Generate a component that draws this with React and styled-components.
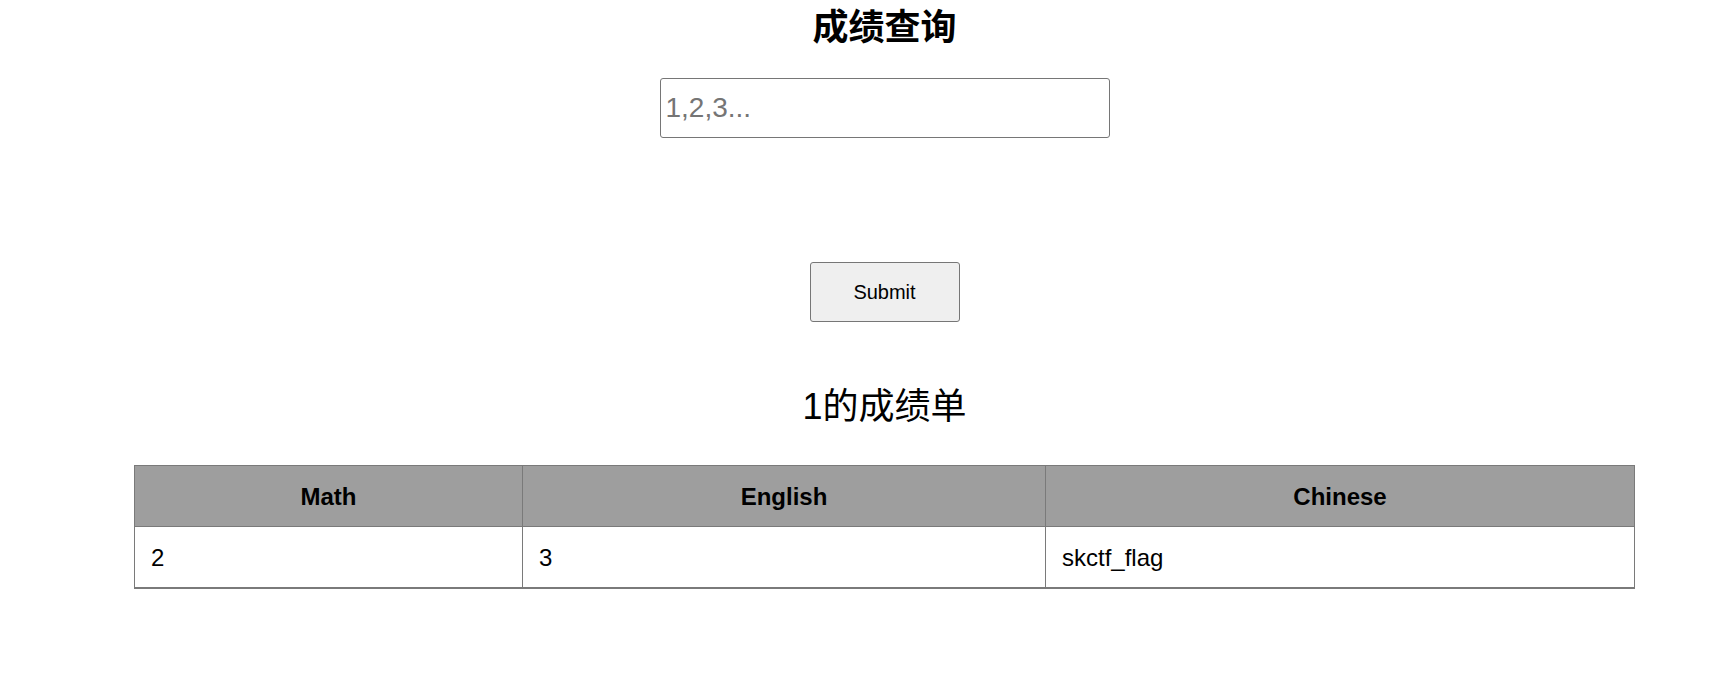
import React from "react";
import styled, { createGlobalStyle } from "styled-components";

const GlobalStyle = createGlobalStyle`
  html, body {
    margin: 0;
    padding: 0;
    background: #ffffff;
  }
  body {
    margin: 8px;
    font-family: "Liberation Sans", Arial, "Noto Sans CJK SC", sans-serif;
    color: #000;
  }
`;

const Page = styled.div`
  display: flex;
  flex-direction: column;
  align-items: center;
  padding-left: 46px;
`;

const Title = styled.h1`
  margin: 0;
  font-family: "Liberation Sans", Arial, "Noto Sans CJK SC", sans-serif;
  font-size: 36px;
  line-height: 40px;
  font-weight: bold;
`;

const QueryForm = styled.form`
  display: flex;
  flex-direction: column;
  align-items: center;
  margin: 30px 0 0;
`;

const QueryInput = styled.input`
  box-sizing: border-box;
  width: 450px;
  height: 60px;
  padding: 0 5px;
  border: 1px solid #767676;
  border-radius: 3px;
  font-family: "Liberation Sans", Arial, sans-serif;
  font-size: 28px;
  color: #000;
  outline: none;
  &::placeholder {
    color: #757575;
  }
`;

const SubmitButton = styled.button`
  box-sizing: border-box;
  margin-top: 124px;
  width: 150px;
  height: 60px;
  background: #efefef;
  border: 1px solid #767676;
  border-radius: 3px;
  font-family: "Liberation Sans", Arial, sans-serif;
  font-size: 20px;
  color: #000;
  cursor: pointer;
`;

const SubTitle = styled.h2`
  margin: 65px 0 0;
  font-family: "Liberation Sans", Arial, "Noto Sans CJK SC", sans-serif;
  font-size: 36px;
  line-height: 40px;
  font-weight: normal;
`;

const ScoreTable = styled.table`
  margin-top: 38px;
  width: 1500px;
  table-layout: fixed;
  border-collapse: collapse;
  border: 1px solid #7a7a7a;
  border-bottom: 2px solid #7a7a7a;
  font-family: "Liberation Sans", Arial, sans-serif;
  font-size: 24px;
`;

const HeadCell = styled.th`
  height: 60px;
  padding: 0 16px;
  background: #9e9e9e;
  border: 1px solid #7a7a7a;
  font-weight: bold;
  text-align: center;
  line-height: 27px;
`;

const DataCell = styled.td`
  height: 60px;
  padding: 0 16px;
  background: #ffffff;
  border: 1px solid #7a7a7a;
  text-align: left;
  line-height: 27px;
`;

const columns = [
  { name: "Math", width: 388, value: "2" },
  { name: "English", width: 523, value: "3" },
  { name: "Chinese", width: 589, value: "skctf_flag" },
];

export default function App() {
  return (
    <>
      <GlobalStyle />
      <Page>
        <Title>成绩查询</Title>
        <QueryForm onSubmit={(e) => e.preventDefault()}>
          <QueryInput type="text" placeholder="1,2,3..." />
          <SubmitButton type="submit">Submit</SubmitButton>
        </QueryForm>
        <SubTitle>1的成绩单</SubTitle>
        <ScoreTable>
          <colgroup>
            {columns.map((c) => (
              <col key={c.name} style={{ width: c.width }} />
            ))}
          </colgroup>
          <thead>
            <tr>
              {columns.map((c) => (
                <HeadCell key={c.name}>{c.name}</HeadCell>
              ))}
            </tr>
          </thead>
          <tbody>
            <tr>
              {columns.map((c) => (
                <DataCell key={c.name}>{c.value}</DataCell>
              ))}
            </tr>
          </tbody>
        </ScoreTable>
      </Page>
    </>
  );
}
